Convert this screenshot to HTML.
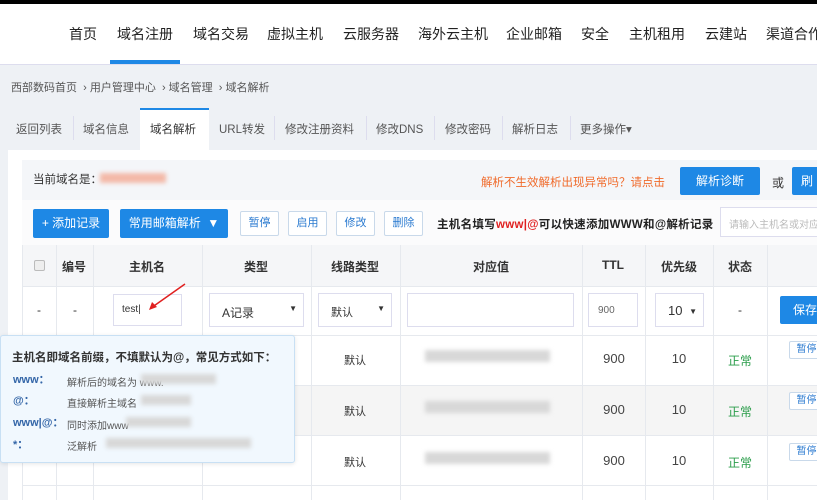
<!DOCTYPE html>
<html><head><meta charset="utf-8"><style>
*{margin:0;padding:0;box-sizing:border-box}
body{width:817px;height:500px;overflow:hidden;position:relative;background:#eef1f5;font-family:"Liberation Sans","Noto Sans CJK SC",sans-serif;color:#333}
.a{position:absolute;white-space:nowrap}
.nav span{position:absolute;top:24px;font-size:14px;color:#222;white-space:nowrap}
.btn{position:absolute;background:#1e88e5;color:#fff;font-size:12px;text-align:center;border-radius:2px;white-space:nowrap;overflow:hidden}
.sb{position:absolute;border:1px solid #c9d9ea;color:#2a7ad0;font-size:11px;text-align:center;background:#fff;border-radius:2px}
.vl{position:absolute;top:245px;width:1px;height:255px;background:#e6e9ee}
.hd{position:absolute;top:258px;font-size:12px;font-weight:bold;color:#333;transform:translateX(-50%);white-space:nowrap}
.c{position:absolute;font-size:12px;transform:translateX(-50%);white-space:nowrap}
.blur{position:absolute;background:#d8d8d8;filter:blur(2px)}
.tt span{position:absolute;font-size:10px;color:#555;white-space:nowrap}
.tt b{position:absolute;font-size:11px;color:#3466a8;white-space:nowrap}
</style></head><body>
<div class="a" style="left:0;top:0;width:817px;height:4px;background:#000"></div>
<div class="a" style="left:0;top:4px;width:817px;height:61px;background:#fff;border-bottom:1px solid #dde"></div>
<div class="nav">
<span style="left:69px">首页</span><span style="left:117px">域名注册</span><span style="left:193px">域名交易</span><span style="left:267px">虚拟主机</span><span style="left:343px">云服务器</span><span style="left:418px">海外云主机</span><span style="left:506px">企业邮箱</span><span style="left:581px">安全</span><span style="left:629px">主机租用</span><span style="left:705px">云建站</span><span style="left:766px">渠道合作</span>
</div>
<div class="a" style="left:110px;top:60px;width:70px;height:4px;background:#1e88e5"></div>
<div class="a" style="left:11px;top:79px;font-size:11px;color:#555">西部数码首页 &nbsp;› 用户管理中心 &nbsp;› 域名管理 &nbsp;› 域名解析</div>
<div class="a" style="left:140px;top:108px;width:69px;height:42px;background:#fff;border-top:2px solid #1e88e5"></div>
<div class="a" style="left:16px;top:121px;font-size:11.5px;color:#555">返回列表</div>
<div class="a" style="left:83px;top:121px;font-size:11.5px;color:#555">域名信息</div>
<div class="a" style="left:150px;top:121px;font-size:11.5px;color:#333">域名解析</div>
<div class="a" style="left:219px;top:121px;font-size:11.5px;color:#555">URL转发</div>
<div class="a" style="left:285px;top:121px;font-size:11.5px;color:#555">修改注册资料</div>
<div class="a" style="left:376px;top:121px;font-size:11.5px;color:#555">修改DNS</div>
<div class="a" style="left:445px;top:121px;font-size:11.5px;color:#555">修改密码</div>
<div class="a" style="left:512px;top:121px;font-size:11.5px;color:#555">解析日志</div>
<div class="a" style="left:580px;top:121px;font-size:11.5px;color:#555">更多操作▾</div>
<div class="a" style="left:73px;top:116px;width:1px;height:24px;background:#dde"></div>
<div class="a" style="left:274px;top:116px;width:1px;height:24px;background:#dde"></div>
<div class="a" style="left:366px;top:116px;width:1px;height:24px;background:#dde"></div>
<div class="a" style="left:434px;top:116px;width:1px;height:24px;background:#dde"></div>
<div class="a" style="left:502px;top:116px;width:1px;height:24px;background:#dde"></div>
<div class="a" style="left:570px;top:116px;width:1px;height:24px;background:#dde"></div>
<div class="a" style="left:8px;top:150px;width:809px;height:350px;background:#fff"></div>
<div class="a" style="left:22px;top:160px;width:795px;height:40px;background:#f4f6f9"></div>
<div class="a" style="left:33px;top:171px;font-size:11.5px;color:#333">当前域名是：</div>
<div class="blur" style="left:100px;top:173px;width:66px;height:10px;background:#f3b9a8"></div>
<div class="a" style="left:481px;top:174px;font-size:11.5px;color:#f06a2a">解析不生效解析出现异常吗？请点击</div>
<div class="btn" style="left:680px;top:167px;width:80px;height:28px;line-height:28px">解析诊断</div>
<div class="a" style="left:772px;top:174px;font-size:12px">或</div>
<div class="btn" style="left:792px;top:167px;width:30px;height:28px;line-height:28px">刷</div>
<div class="a" style="left:22px;top:200px;width:795px;height:45px;background:#fbfbfc"></div>
<div class="btn" style="left:33px;top:209px;width:76px;height:29px;line-height:29px">+ 添加记录</div>
<div class="btn" style="left:120px;top:209px;width:108px;height:29px;line-height:29px">常用邮箱解析 &nbsp;▼</div>
<div class="sb" style="left:240px;top:211px;width:39px;height:25px;line-height:23px">暂停</div>
<div class="sb" style="left:288px;top:211px;width:39px;height:25px;line-height:23px">启用</div>
<div class="sb" style="left:336px;top:211px;width:39px;height:25px;line-height:23px">修改</div>
<div class="sb" style="left:384px;top:211px;width:39px;height:25px;line-height:23px">删除</div>
<div class="a" style="left:437px;top:216px;font-size:11.5px;font-weight:bold;color:#222;letter-spacing:0.3px">主机名填写<span style="color:#e02020">www|@</span>可以快速添加WWW和@解析记录</div>
<div class="a" style="left:720px;top:207px;width:100px;height:30px;border:1px solid #dde;background:#fff;font-size:10px;color:#bbb;padding:8px 8px">请输入主机名或对应值</div>
<div class="a" style="left:22px;top:245px;width:795px;height:41px;background:#f5f6f8"></div>
<div class="a" style="left:22px;top:385px;width:795px;height:50px;background:#f5f5f5"></div>
<div class="a" style="left:22px;top:286px;width:795px;height:1px;background:#e6e9ee"></div>
<div class="a" style="left:22px;top:335px;width:795px;height:1px;background:#e6e9ee"></div>
<div class="a" style="left:22px;top:385px;width:795px;height:1px;background:#e6e9ee"></div>
<div class="a" style="left:22px;top:435px;width:795px;height:1px;background:#e6e9ee"></div>
<div class="a" style="left:22px;top:485px;width:795px;height:1px;background:#e6e9ee"></div>
<div class="vl" style="left:22px"></div><div class="vl" style="left:56px"></div><div class="vl" style="left:93px"></div><div class="vl" style="left:202px"></div><div class="vl" style="left:311px"></div><div class="vl" style="left:400px"></div><div class="vl" style="left:582px"></div><div class="vl" style="left:645px"></div><div class="vl" style="left:713px"></div><div class="vl" style="left:767px"></div>
<div class="a" style="left:34px;top:260px;width:11px;height:11px;border:1px solid #bbb;border-radius:2px;background:#eee"></div>
<div class="hd" style="left:74px">编号</div><div class="hd" style="left:147px">主机名</div><div class="hd" style="left:256px">类型</div><div class="hd" style="left:355px">线路类型</div><div class="hd" style="left:491px">对应值</div><div class="hd" style="left:613px">TTL</div><div class="hd" style="left:679px">优先级</div><div class="hd" style="left:740px">状态</div>
<div class="c" style="left:39px;top:303px">-</div><div class="c" style="left:75px;top:303px">-</div>
<div class="a" style="left:113px;top:294px;width:69px;height:32px;border:1px solid #dde;font-size:10px;padding:9px 8px">test|</div>
<svg class="a" style="left:145px;top:282px" width="42" height="30"><line x1="40" y1="2" x2="6" y2="26" stroke="#e02020" stroke-width="1.5"/><path d="M4 28 L7 20 L12 25 Z" fill="#e02020"/></svg>
<div class="a" style="left:209px;top:293px;width:95px;height:34px;border:1px solid #dde;font-size:12px;padding:10px 12px">A记录<span style="position:absolute;right:6px;font-size:8px">▼</span></div>
<div class="a" style="left:318px;top:293px;width:74px;height:34px;border:1px solid #dde;font-size:11px;padding:10px 12px">默认<span style="position:absolute;right:6px;font-size:8px">▼</span></div>
<div class="a" style="left:407px;top:293px;width:167px;height:34px;border:1px solid #dde"></div>
<div class="a" style="left:588px;top:293px;width:50px;height:34px;border:1px solid #dde;font-size:10px;color:#666;padding:11px 9px">900</div>
<div class="a" style="left:655px;top:293px;width:49px;height:34px;border:1px solid #dde;font-size:13px;padding:9px 12px">10<span style="position:absolute;right:6px;font-size:8px;top:13px">▼</span></div>
<div class="c" style="left:740px;top:303px">-</div>
<div class="btn" style="left:780px;top:296px;width:50px;height:28px;line-height:28px">保存</div>
<div class="c" style="left:355px;top:352px;font-size:11px">默认</div><div class="c" style="left:355px;top:403px;font-size:11px">默认</div><div class="c" style="left:355px;top:454px;font-size:11px">默认</div>
<div class="blur" style="left:425px;top:350px;width:125px;height:12px"></div><div class="blur" style="left:425px;top:401px;width:125px;height:12px"></div><div class="blur" style="left:425px;top:452px;width:125px;height:12px"></div>
<div class="c" style="left:614px;top:351px;font-size:13px;color:#444">900</div><div class="c" style="left:614px;top:402px;font-size:13px;color:#444">900</div><div class="c" style="left:614px;top:453px;font-size:13px;color:#444">900</div>
<div class="c" style="left:679px;top:351px;font-size:13px;color:#444">10</div><div class="c" style="left:679px;top:402px;font-size:13px;color:#444">10</div><div class="c" style="left:679px;top:453px;font-size:13px;color:#444">10</div>
<div class="c" style="left:740px;top:352px;color:#2a9d4a">正常</div><div class="c" style="left:740px;top:403px;color:#2a9d4a">正常</div><div class="c" style="left:740px;top:454px;color:#2a9d4a">正常</div>
<div class="sb" style="left:789px;top:341px;width:35px;height:18px;line-height:16px;font-size:10px">暂停</div><div class="sb" style="left:789px;top:392px;width:35px;height:18px;line-height:16px;font-size:10px">暂停</div><div class="sb" style="left:789px;top:443px;width:35px;height:18px;line-height:16px;font-size:10px">暂停</div>
<div class="a tt" style="left:0;top:335px;width:295px;height:128px;background:#f1f8fe;border:1px solid #c8e0f4;border-radius:3px;box-shadow:0 1px 4px rgba(0,0,0,.1)">
<div style="position:absolute;left:11px;top:13px;font-size:11.5px;font-weight:bold;color:#333">主机名即域名前缀，不填默认为@，常见方式如下：</div>
<b style="left:12px;top:35px">www：</b><span style="left:66px;top:38px">解析后的域名为 www.</span>
<b style="left:12px;top:56px">@：</b><span style="left:66px;top:59px">直接解析主域名</span>
<b style="left:12px;top:78px">www|@：</b><span style="left:66px;top:81px">同时添加www</span>
<b style="left:12px;top:100px">*：</b><span style="left:66px;top:102px">泛解析</span>
<div class="blur" style="left:140px;top:38px;width:75px;height:10px"></div>
<div class="blur" style="left:140px;top:59px;width:50px;height:10px"></div>
<div class="blur" style="left:125px;top:81px;width:65px;height:10px"></div>
<div class="blur" style="left:105px;top:102px;width:145px;height:10px"></div>
</div>
</body></html>
